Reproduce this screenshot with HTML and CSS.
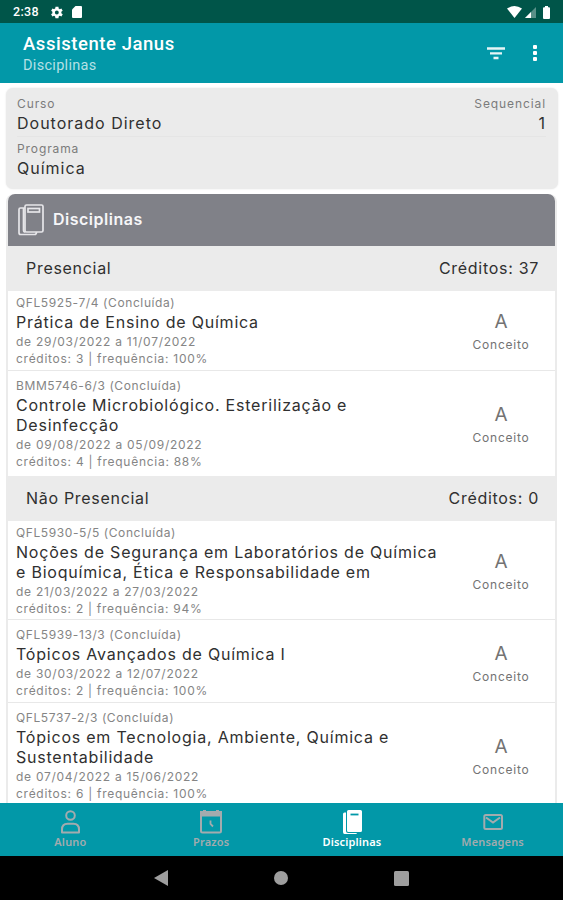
FILE: index.html
```html
<!DOCTYPE html>
<html lang="pt-BR">
<head>
<meta charset="utf-8">
<title>Assistente Janus</title>
<link rel="stylesheet" href="styles.css">
</head>
<body>
<div class="status">
  <span class="clock">2:38</span>
  <svg class="gear" width="13" height="13" viewBox="2 2 20 20"><path fill="#fff" fill-rule="evenodd" d="M19.4 13c.1-.7.1-1.300 0-2l2.100-1.600-2-3.500-2.500 1a7 7 0 0 0-1.700-1L15 3.200h-4.500L10 5.900a7 7 0 0 0-1.700 1l-2.500-1-2 3.500L5.700 11a8 8 0 0 0 0 2l-2 1.600 2 3.500 2.500-1a7 7 0 0 0 1.700 1l.5 2.700H15l.4-2.700a7 7 0 0 0 1.700-1l2.500 1 2-3.500zM12.500 15a3 3 0 1 1 0-6 3 3 0 0 1 0 6z"/></svg>
  <svg class="sd" width="10" height="12" viewBox="0 0 10 12"><path fill="#fff" d="M3.500 0H9q1 0 1 1v10q0 1-1 1H1q-1 0-1-1V3.500z"/></svg>
  <svg class="wifi" width="15" height="12" viewBox="0 0 15 12"><path fill="#fff" d="M0 2.500Q7.500-2.500 15 2.500L7.500 12z"/></svg>
  <svg class="signal" width="11" height="11" viewBox="0 0 11 11"><path fill="#fff" opacity=".35" d="M0 11L11 0v11z"/><path fill="#fff" d="M0 11l6-6v6z"/></svg>
  <svg class="battery" width="7" height="13" viewBox="0 0 7 13"><path fill="#fff" d="M2 0h3v1.300h1q1 0 1 1V12q0 1-1 1H1q-1 0-1-1V2.300q0-1 1-1h1z"/></svg>
</div>
<header class="appbar">
  <div class="heading"><h1>Assistente Janus</h1><p>Disciplinas</p></div>
  <svg class="filter" width="18" height="13" viewBox="0 0 18 13"><path stroke="#e6f5f6" stroke-width="2.300" d="M0 1.500h18M3 6.300h12M6.500 11h5"/></svg>
  <svg class="more" width="4" height="16" viewBox="0 0 4 16"><g fill="#fff"><rect width="4" height="4" rx="1"/><rect y="6" width="4" height="4" rx="1"/><rect y="12" width="4" height="4" rx="1"/></g></svg>
</header>
<main>
  <section class="course">
    <div class="row"><div><div class="label">Curso</div><div class="value">Doutorado Direto</div></div><div class="right"><div class="label">Sequencial</div><div class="value">1</div></div></div>
    <div class="row second"><div><div class="label">Programa</div><div class="value">Química</div></div></div>
  </section>
  <section class="list">
    <div class="list-head">
      <svg width="26" height="32" viewBox="0 0 26 32" fill="none" stroke="#e6e6e9" stroke-width="1.700"><rect x="7" y="1" width="18" height="27" rx="1.500"/><path d="M7 4H2.500Q1 4 1 5.500v23Q1 30.500 2.500 30.500h14q2 0 2-2.500M5.500 4v22q0 2 2 2"/><rect x="10" y="4.500" width="11.500" height="3.500"/></svg>
      <span>Disciplinas</span>
    </div>
    <div class="group"><span>Presencial</span><span>Créditos: 37</span></div>
    <article class="item first"><div class="info"><div class="code">QFL5925-7/4 (Concluída)</div><div class="title">Prática de Ensino de Química</div><div class="meta">de 29/03/2022 a 11/07/2022</div><div class="meta">créditos: 3 | frequência: 100%</div></div><div class="grade"><b>A</b><span>Conceito</span></div></article>
    <article class="item last"><div class="info"><div class="code">BMM5746-6/3 (Concluída)</div><div class="title">Controle Microbiológico. Esterilização e<br>Desinfecção</div><div class="meta">de 09/08/2022 a 05/09/2022</div><div class="meta">créditos: 4 | frequência: 88%</div></div><div class="grade"><b>A</b><span>Conceito</span></div></article>
    <div class="group"><span>Não Presencial</span><span>Créditos: 0</span></div>
    <article class="item first tight"><div class="info"><div class="code">QFL5930-5/5 (Concluída)</div><div class="title">Noções de Segurança em Laboratórios de Química<br>e Bioquímica, Ética e Responsabilidade em</div><div class="meta">de 21/03/2022 a 27/03/2022</div><div class="meta">créditos: 2 | frequência: 94%</div></div><div class="grade"><b>A</b><span>Conceito</span></div></article>
    <article class="item"><div class="info"><div class="code">QFL5939-13/3 (Concluída)</div><div class="title">Tópicos Avançados de Química I</div><div class="meta">de 30/03/2022 a 12/07/2022</div><div class="meta">créditos: 2 | frequência: 100%</div></div><div class="grade"><b>A</b><span>Conceito</span></div></article>
    <article class="item"><div class="info"><div class="code">QFL5737-2/3 (Concluída)</div><div class="title">Tópicos em Tecnologia, Ambiente, Química e<br>Sustentabilidade</div><div class="meta">de 07/04/2022 a 15/06/2022</div><div class="meta">créditos: 6 | frequência: 100%</div></div><div class="grade"><b>A</b><span>Conceito</span></div></article>
  </section>
</main>
<nav class="tabs">
  <div class="tab"><svg width="20" height="24" viewBox="0 0 20 24" fill="none" stroke="currentColor" stroke-width="2"><circle cx="10.500" cy="5.500" r="4.300"/><path d="M2 22.500v-3Q2 13.800 7.500 13.800h6q5.500 0 5.500 5.700v3z" stroke-linejoin="round"/></svg><span>Aluno</span></div>
  <div class="tab"><svg width="22" height="24" viewBox="0 0 22 24" fill="none" stroke="currentColor" stroke-width="2"><rect x="1" y="2" width="20" height="20.500" rx="1.500"/><path fill="currentColor" stroke="none" d="M0 1h3V0h3v1h10V0h3v1h3v5.500H0z"/><path d="M10.500 10.500v3.500l2.500 2.500" stroke-width="1.800"/></svg><span>Prazos</span></div>
  <div class="tab active"><svg width="20" height="24" viewBox="0 0 20 24"><path fill="#fff" d="M6.500 0h12Q20 0 20 1.500v19q0 1.500-1.500 1.500h-12Q5 22 5 20.500V1.500Q5 0 6.500 0zM1 4q0-1.500 1.500-1.500H4V21q0 2 2 2h9q0 1-1.500 1h-11Q1 24 1 22z"/><path stroke="#0298a8" stroke-width="1.800" d="M8.500 4.500h8"/></svg><span>Disciplinas</span></div>
  <div class="tab"><svg width="20" height="24" viewBox="0 0 20 24" fill="none" stroke="currentColor" stroke-width="2"><rect x="1.300" y="5" width="17.700" height="14" rx="1.500"/><path d="M3 7.500l7 5 7-5"/></svg><span>Mensagens</span></div>
</nav>
<footer class="sysnav">
  <svg width="14" height="16" viewBox="0 0 14 16"><path fill="#9e9e9e" d="M14 0v16L0 8z"/></svg>
  <svg width="14" height="14" viewBox="0 0 14 14"><circle fill="#9e9e9e" cx="7" cy="7" r="7"/></svg>
  <svg width="15" height="15" viewBox="0 0 15 15"><rect fill="#9e9e9e" width="15" height="15" rx="1.500"/></svg>
</footer>
</body>
</html>
```
FILE: styles.css
```css
* { box-sizing: border-box; }
body { margin: 0; width: 563px; height: 900px; overflow: hidden; display: flex; flex-direction: column; background: #fff; font-family: Inter, sans-serif; white-space: nowrap; }
svg { display: block; flex: none; }
.status { height: 23px; flex: none; background: #005549; display: flex; align-items: center; padding: 1px 13px 0 13px; color: #fff; }
.clock { font: 500 12.500px/20px Roboto, sans-serif; width: 37px; letter-spacing: .3px; }
.sd { margin-left: 9px; }
.wifi { margin-left: auto; margin-right: -1px; }
.signal { margin-left: 4px; }
.battery { margin-left: 7px; }
.appbar { height: 60px; flex: none; background: #0298a8; display: flex; align-items: center; padding: 0 26px 0 23px; color: #fff; font-family: Roboto, sans-serif; }
.heading { flex: 1; padding-top: 2px; }
h1 { margin: 0; font-size: 18.500px; font-weight: 500; line-height: 24px; letter-spacing: .55px; }
.heading p { margin: 0; font-size: 14.500px; line-height: 20px; color: #b5e0e5; letter-spacing: .3px; }
.filter { margin-right: 28px; }
main { flex: 1; min-height: 0; overflow: hidden; }
.course { margin: 5px 5px 0 6px; height: 101px; border-radius: 7px; background: #ebebeb; padding: 7px 12px 0 11px; box-shadow: 0 0 2px #e4e4e4; }
.row { display: flex; justify-content: space-between; height: 42px; border-bottom: 1px solid #e5e5e5; }
.right { text-align: right; }
.second { border: 0; padding-top: 3px; }
.label { font-size: 12px; line-height: 18px; color: #7b7b7b; letter-spacing: .9px; }
.value { font-size: 16px; line-height: 20px; color: #303030; letter-spacing: 1px; }
.list { margin: 5px 6px 0 6px; border: solid #ebebeb; border-width: 0 2px; border-radius: 8px 8px 0 0; }
.list-head { height: 52px; background: #808188; border-radius: 7px 7px 0 0; display: flex; align-items: center; padding-left: 10px; gap: 9px; color: #f6f6f8; font-size: 16px; font-weight: 600; letter-spacing: .5px; }
.list-head span { padding-bottom: 2px; }
.group { height: 45px; background: #ebebeb; display: flex; justify-content: space-between; align-items: center; padding: 0 16px 2px 18px; color: #303030; font-size: 16px; letter-spacing: .7px; }
.item { display: flex; padding: 6px 0 3px 8px; border-bottom: 1px solid #e8e8e8; }
.item.first { padding-top: 3px; }
.item.tight { padding-bottom: 2px; }
.item.last { padding-bottom: 6px; border: 0; }
.info { flex: 1; }
.code, .meta { font-size: 12px; line-height: 17px; color: #858585; letter-spacing: .6px; }
.meta { letter-spacing: .73px; }
.title { margin: 1px 0; font-size: 16px; line-height: 20px; color: #303030; letter-spacing: .78px; }
.grade { width: 108px; padding-top: 5px; display: flex; flex-direction: column; align-items: center; justify-content: center; color: #737373; }
.grade b { font-size: 19px; line-height: 24px; font-weight: 400; }
.grade span { font-size: 12px; line-height: 22px; letter-spacing: .75px; }
.tabs { height: 53px; flex: none; display: grid; grid-template-columns: repeat(4, 1fr); background: #0298a8; color: #a3abae; }
.tab { display: flex; flex-direction: column; align-items: center; padding-top: 7px; font: 600 11px/15px "Noto Sans", sans-serif; letter-spacing: .15px; }
.active { color: #fff; }
.sysnav { height: 44px; flex: none; background: #000; display: flex; align-items: center; justify-content: center; gap: 106px; }
```
